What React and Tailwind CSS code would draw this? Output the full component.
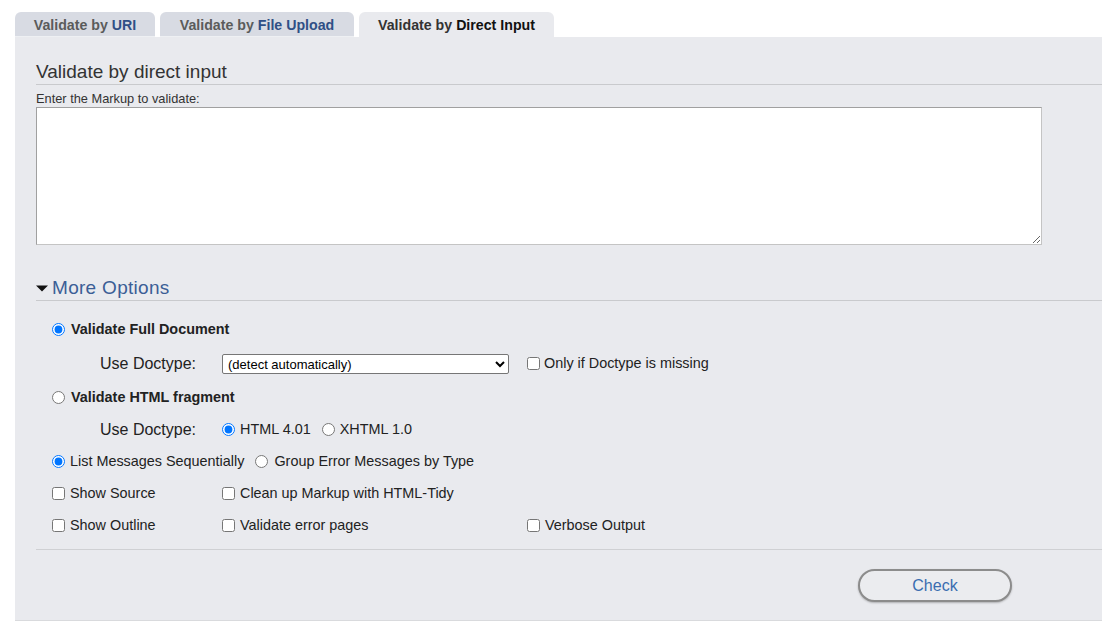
import { useState } from "react";

/* tabs across the top of the validator form */
const TABS = [
  { pre: "Validate by ", key: "URI", w: "w-[140px]" },
  { pre: "Validate by ", key: "File Upload", w: "w-[194px]" },
  { pre: "Validate by ", key: "Direct Input", w: "w-[195px]", active: true },
];

function Radio({ checked, name }) {
  return (
    <input
      type="radio"
      name={name}
      defaultChecked={checked}
      className="m-0 w-[13px] h-[13px] shrink-0"
    />
  );
}

function Check() {
  return <input type="checkbox" className="m-0 w-[13px] h-[13px] shrink-0" />;
}

function Opt({ children, box, gap = "gap-[5px]" }) {
  return (
    <label className={`flex items-center ${gap} text-[14.4px] text-[#222]`}>
      {box}
      <span>{children}</span>
    </label>
  );
}

export default function App() {
  const [tab] = useState(2);

  return (
    <div
      className="min-h-[626px] bg-white pt-[12px] pl-[15px] overflow-hidden"
      style={{ fontFamily: '"Liberation Sans", Arial, sans-serif' }}
    >
      {/* tab strip */}
      <div className="flex gap-[5px] h-[25px]">
        {TABS.map((t, i) => (
          <div
            key={t.key}
            className={`${t.w} rounded-t-[6px] text-center pt-[4px] leading-[18px] text-[14.2px] font-bold ${
              i === tab ? "bg-[#e9eaee] text-[#333]" : "bg-[#d8dbe3] text-[#5b5b5b] border-b border-[#eef0f3]"
            }`}
          >
            <span className="whitespace-pre">{t.pre}</span>
            <span className={i === tab ? "text-[#111]" : "text-[#2f4f86]"}>{t.key}</span>
          </div>
        ))}
      </div>

      {/* panel */}
      <div className="bg-[#e9eaee] h-[584px] border-b border-[#d9dadd] pl-[21px]">
        <h2 className="pt-[24px] text-[19px] leading-[22px] text-[#333] pb-[1px] border-b border-[#c9cacd]">
          Validate by direct input
        </h2>
        <div className="mt-[7px] text-[12.8px] leading-[14px] text-[#333]">Enter the Markup to validate:</div>
        <textarea className="block mt-[1px] w-[1006px] h-[138px] bg-white border border-[#c4c4c4] border-t-[#a0a0a0] border-l-[#a0a0a0] resize" />

        <div className="mt-[32px] flex items-center pb-[1px] border-b border-[#c9cacd] h-[24px]">
          <svg width="12" height="8" viewBox="0 0 12 8" className="mr-[4px]">
            <path d="M0 1.5 L12 1.5 L6 7.5 Z" fill="#111" />
          </svg>
          <span className="text-[19px] leading-[22px] text-[#3b5e96] tracking-[0.3px]">More Options</span>
        </div>

        <div className="mt-[11px]">
          <div className="h-[34px] flex items-center pl-[16px] pt-[2px]">
            <label className="flex items-center gap-[6px] text-[14.4px] font-bold text-[#222]">
              <Radio name="mode" checked />
              Validate Full Document
            </label>
          </div>
          <div className="h-[34px] flex items-center pl-[64px] pt-[2px]">
            <span className="w-[122px] text-[16px] text-[#222]">Use Doctype:</span>
            <select className="w-[287px] h-[20px] text-[13px] text-black bg-white border border-[#767676] rounded-[2px] pl-[1px]">
              <option>(detect automatically)</option>
            </select>
            <div className="ml-[18px]">
              <Opt box={<Check />} gap="gap-[4px]">Only if Doctype is missing</Opt>
            </div>
          </div>
          <div className="h-[33px] flex items-center pl-[16px] pt-[2px]">
            <label className="flex items-center gap-[6px] text-[14.4px] font-bold text-[#222]">
              <Radio name="mode" />
              Validate HTML fragment
            </label>
          </div>
          <div className="h-[32px] flex items-center pl-[64px] pt-[2px]">
            <span className="w-[122px] text-[16px] text-[#222]">Use Doctype:</span>
            <Opt box={<Radio name="frag" checked />}>HTML 4.01</Opt>
            <div className="ml-[11px]">
              <Opt box={<Radio name="frag" />}>XHTML 1.0</Opt>
            </div>
          </div>
          <div className="h-[32px] flex items-center pl-[16px] pt-[2px]">
            <Opt box={<Radio name="group" checked />}>List Messages Sequentially</Opt>
            <div className="ml-[11px]">
              <Opt box={<Radio name="group" />} gap="gap-[6px]">Group Error Messages by Type</Opt>
            </div>
          </div>
          <div className="h-[32px] grid grid-cols-[170px_305px_1fr] items-center pl-[16px] pt-[2px]">
            <Opt box={<Check />}>Show Source</Opt>
            <Opt box={<Check />}>Clean up Markup with HTML-Tidy</Opt>
            <div />
          </div>
          <div className="h-[32px] grid grid-cols-[170px_305px_1fr] items-center pl-[16px] pt-[2px]">
            <Opt box={<Check />}>Show Outline</Opt>
            <Opt box={<Check />}>Validate error pages</Opt>
            <Opt box={<Check />}>Verbose Output</Opt>
          </div>
        </div>

        <div className="mt-[8px] border-t border-[#cfd0d3]" />
        <button className="mt-[19px] ml-[822px] w-[154px] h-[33px] pt-[1px] rounded-full border-2 border-[#8c8c8c] bg-[#ebecef] text-[16px] text-[#3a6db0] shadow-[0_1px_2px_rgba(0,0,0,0.25)]">
          Check
        </button>
      </div>
    </div>
  );
}
